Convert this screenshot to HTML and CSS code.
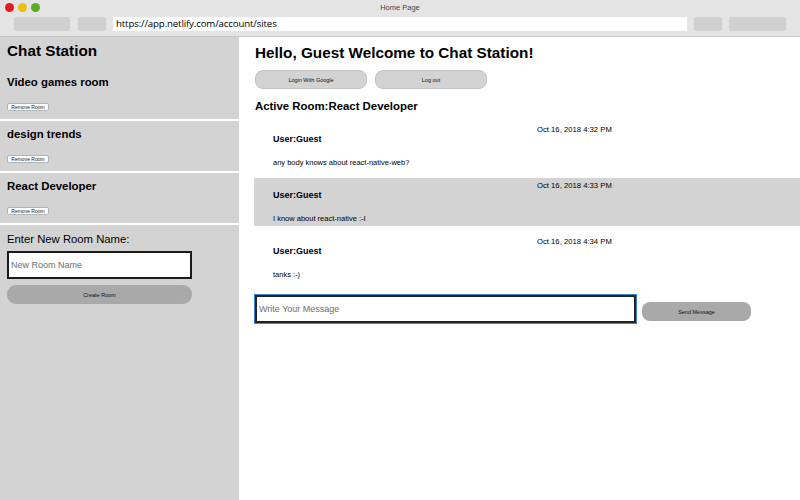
FILE: index.html
```html
<!DOCTYPE html>
<html>
<head>
<meta charset="utf-8">
<link rel="stylesheet" href="styles.css">
</head>
<body>
<div class="chrome">
  <div class="titlebar">
    <div class="lights">
      <span class="light red"></span>
      <span class="light yellow"></span>
      <span class="light green"></span>
    </div>
    <div class="title">Home Page</div>
  </div>
  <div class="toolbar">
    <span class="tb-btn w56"></span>
    <span class="tb-btn w28"></span>
    <div class="url">https://app.netlify.com/account/sites</div>
    <span class="tb-btn w28"></span>
    <span class="tb-btn w57"></span>
  </div>
</div>
<div class="app">
  <aside class="sidebar">
    <h1 class="brand">Chat Station</h1>
    <div class="room">
      <h3 class="room-name">Video games room</h3>
      <button class="remove">Remove Room</button>
    </div>
    <div class="room">
      <h3 class="room-name">design trends</h3>
      <button class="remove">Remove Room</button>
    </div>
    <div class="room">
      <h3 class="room-name">React Developer</h3>
      <button class="remove">Remove Room</button>
    </div>
    <div class="new-room">
      <label class="new-label">Enter New Room Name:</label>
      <input class="new-input" placeholder="New Room Name">
      <button class="create">Create Room</button>
    </div>
  </aside>
  <main class="main">
    <h1 class="hello">Hello, Guest Welcome to Chat Station!</h1>
    <div class="auth">
      <button class="auth-btn">Login With Google</button>
      <button class="auth-btn">Log out</button>
    </div>
    <h3 class="active">Active Room:React Developer</h3>
    <div class="msg first">
      <div class="msg-left">
        <div class="user">User:Guest</div>
        <div class="text">any body knows about react-native-web?</div>
      </div>
      <div class="date">Oct 16, 2018 4:32 PM</div>
    </div>
    <div class="msg alt">
      <div class="msg-left">
        <div class="user">User:Guest</div>
        <div class="text">I know about react-native :-I</div>
      </div>
      <div class="date">Oct 16, 2018 4:33 PM</div>
    </div>
    <div class="msg">
      <div class="msg-left">
        <div class="user">User:Guest</div>
        <div class="text">tanks :-)</div>
      </div>
      <div class="date">Oct 16, 2018 4:34 PM</div>
    </div>
    <div class="compose">
      <input class="compose-input" placeholder="Write Your Message">
      <button class="send">Send Message</button>
    </div>
  </main>
</div>
</body>
</html>
```
FILE: styles.css
```css
* { box-sizing: border-box; }
html, body { margin: 0; padding: 0; }
body {
  width: 800px;
  height: 500px;
  overflow: hidden;
  background: #fff;
  font-family: "Liberation Sans", Arial, Helvetica, sans-serif;
  color: #000;
  display: flex;
  flex-direction: column;
}

/* browser chrome */
.chrome {
  height: 37px;
  background: #e4e4e4;
  border-bottom: 1px solid #c6c6c6;
  flex: none;
}
.titlebar {
  position: relative;
  height: 16px;
}
.lights {
  display: flex;
  gap: 4px;
  padding: 3px 0 0 5px;
}
.light {
  width: 9px;
  height: 9px;
  border-radius: 50%;
  display: block;
}
.red { background: #e8191c; }
.yellow { background: #e8c20b; }
.green { background: #5aac25; }
.title {
  position: absolute;
  left: 0;
  right: 0;
  top: 3px;
  text-align: center;
  font-size: 7.5px;
  color: #444;
}
.toolbar {
  display: flex;
  align-items: center;
  padding: 1px 0 0 14px;
  height: 15px;
}
.tb-btn {
  display: block;
  height: 14px;
  background: #d0d0d0;
  border-radius: 2px;
}
.w56 { width: 56px; margin-right: 8px; }
.w28 { width: 28px; margin-right: 7px; }
.w57 { width: 57px; }
.url {
  width: 574px;
  height: 14px;
  background: #fff;
  margin-right: 7px;
  font-size: 9.7px;
  line-height: 14px;
  padding-left: 3px;
  color: #000;
  font-family: "Open Sans", "Liberation Sans", sans-serif;
  letter-spacing: -0.15px;
}

/* app */
.app {
  flex: 1;
  display: flex;
}
.sidebar {
  width: 239px;
  background: #d3d3d3;
  flex: none;
}
.brand {
  margin: 4px 0 8px 7px;
  font-size: 15.3px;
  line-height: 20px;
  font-weight: bold;
}
.room {
  padding: 6px 0 8px 7px;
  border-bottom: 2px solid #fff;
  height: 52px;
}
.room-name {
  margin: 0;
  font-size: 11.4px;
  line-height: 14px;
  font-weight: bold;
}
.remove {
  display: block;
  margin-top: 14px;
  width: 42px;
  height: 8px;
  padding: 0;
  background: #fff;
  border: 1px solid #b4b4b4;
  border-radius: 2px;
  font-family: "Liberation Sans", sans-serif;
  font-size: 5px;
  line-height: 6px;
  color: #222;
}
.new-room {
  padding: 7px 0 0 7px;
}
.new-label {
  display: block;
  font-size: 11.3px;
  line-height: 14px;
}
.new-input {
  display: block;
  margin-top: 5px;
  width: 185px;
  height: 28px;
  border: 2px solid #1a1a1a;
  background: #fff;
  padding: 0 0 0 2px;
  font-family: "Liberation Sans", sans-serif;
  font-size: 9px;
  outline: none;
}
.new-input::placeholder { color: #6e6e6e; }
.create {
  display: block;
  margin-top: 6px;
  width: 185px;
  height: 19px;
  border: none;
  border-radius: 9px;
  background: #a9a9a9;
  font-family: "Liberation Sans", sans-serif;
  font-size: 5.5px;
  color: #111;
  padding: 0;
}

.main {
  flex: 1;
  padding-left: 15px;
}
.hello {
  margin: 6px 0 0 1px;
  font-size: 15.3px;
  line-height: 20px;
  font-weight: bold;
}
.auth {
  display: flex;
  gap: 8px;
  margin: 7px 0 0 1px;
}
.auth-btn {
  width: 112px;
  height: 19px;
  background: #d3d3d3;
  border: 1px solid #c4c4c4;
  border-radius: 8px;
  font-family: "Liberation Sans", sans-serif;
  font-size: 5.5px;
  color: #111;
  padding: 0;
}
.active {
  margin: 10px 0 0 1px;
  font-size: 11.4px;
  line-height: 14px;
  font-weight: bold;
}
.msg {
  margin-top: 8px;
  height: 48px;
  display: flex;
  padding-left: 19px;
  color: #000;
}
.msg.first { margin-top: 9px; }
.msg.alt { background: #d3d3d3; }
.msg-left { width: 264px; }
.user {
  margin-top: 11px;
  font-size: 9px;
  line-height: 12px;
  font-weight: bold;
}
.text {
  margin-top: 13px;
  font-size: 7.5px;
  line-height: 10px;
  color: #000;
}
.date {
  margin-top: 3px;
  font-size: 7.7px;
  line-height: 10px;
  color: #000;
}
.compose {
  display: flex;
  align-items: flex-start;
  gap: 6px;
  margin-top: 13px;
  padding-left: 1px;
}
.compose-input {
  width: 381px;
  height: 28px;
  border: 2px solid #222;
  box-shadow: 0 0 0 1px #3d86d4;
  outline: none;
  padding: 0 0 0 2px;
  font-family: "Liberation Sans", sans-serif;
  font-size: 9px;
  background: #fff;
}
.compose-input::placeholder { color: #6e6e6e; }
.send {
  margin-top: 7px;
  width: 109px;
  height: 19px;
  border: none;
  border-radius: 8px;
  background: #a9a9a9;
  font-family: "Liberation Sans", sans-serif;
  font-size: 5.5px;
  color: #111;
  padding: 0;
}
```
